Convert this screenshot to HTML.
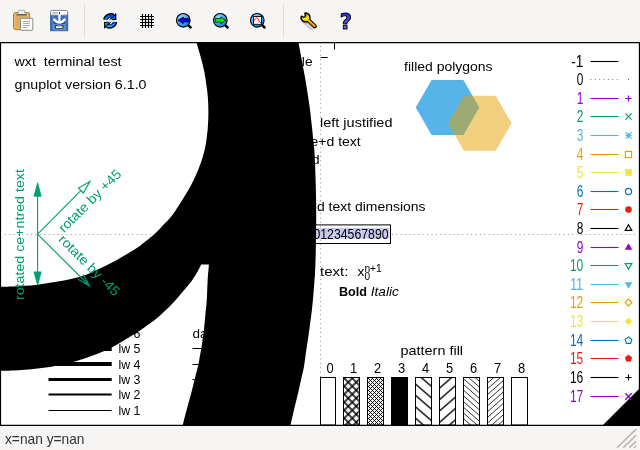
<!DOCTYPE html>
<html lang="en"><head><meta charset="utf-8"><title>gnuplot wxt terminal test</title>
<style>
html,body{margin:0;padding:0;width:640px;height:450px;overflow:hidden;background:#f6f5f4}
svg{display:block;position:absolute;left:0;top:0;will-change:transform}
text{font-family:"Liberation Sans", "DejaVu Sans", sans-serif;white-space:pre}
.g text{fill:#009e73}
</style></head><body>
<svg width="640" height="450" viewBox="0 0 640 450" font-size="13.5" fill="#000">
<defs>
<radialGradient id="lens" cx="0.35" cy="0.3" r="0.8"><stop offset="0" stop-color="#a8dcff"/><stop offset="0.6" stop-color="#3aa0f0"/><stop offset="1" stop-color="#0a6fd8"/></radialGradient>
<linearGradient id="qg" x1="0" y1="0" x2="0" y2="1"><stop offset="0" stop-color="#1c1ce8"/><stop offset="1" stop-color="#7a7aff"/></linearGradient>
<linearGradient id="bl" x1="0" y1="0" x2="0" y2="1"><stop offset="0" stop-color="#0a3cff"/><stop offset="1" stop-color="#1fa8ff"/></linearGradient>
</defs>

<rect x="0" y="0" width="640" height="450" fill="#f6f5f4"/>
<rect x="0" y="42" width="640" height="384" fill="#fff"/>
<g id="plot">
<path d="M320.5 46V425" stroke="#000" stroke-opacity="0.43" stroke-width="1" stroke-dasharray="1 3.4" fill="none"/>
<path d="M4.7 234.5H638" stroke="#000" stroke-opacity="0.43" stroke-width="1" stroke-dasharray="1 3.4" fill="none"/>
<path d="M334.5 43V49.5M320.5 57.5H327.7" stroke="#000" stroke-width="1" fill="none"/>
<text x="14.5" y="65.7" textLength="107.0" lengthAdjust="spacingAndGlyphs">wxt  terminal test</text>
<text x="14.5" y="89.4" textLength="132.0" lengthAdjust="spacingAndGlyphs">gnuplot version 6.1.0</text>
<text x="312.6" y="65.9" text-anchor="end" textLength="82.0" lengthAdjust="spacingAndGlyphs">show ticscale</text>
<text x="320.0" y="126.5" textLength="72.5" lengthAdjust="spacingAndGlyphs">left justified</text>
<text x="320.0" y="145.7" text-anchor="middle" textLength="81.5" lengthAdjust="spacingAndGlyphs">centre+d text</text>
<text x="319.8" y="164.4" text-anchor="end" textLength="80.0" lengthAdjust="spacingAndGlyphs">right justified</text>
<text x="320.0" y="210.8" text-anchor="middle" textLength="211.0" lengthAdjust="spacingAndGlyphs">true vs. estimated text dimensions</text>
<rect x="252" y="228" width="137.4" height="10.6" fill="#c9c9ee"/>
<rect x="249.5" y="224.9" width="141" height="18.6" fill="none" stroke="#000" stroke-width="1"/>
<text x="320.3" y="239.1" text-anchor="middle" textLength="136.5" lengthAdjust="spacingAndGlyphs" font-size="15">12345678901234567890</text>
<text x="348.3" y="276.3" text-anchor="end" textLength="99.8" lengthAdjust="spacingAndGlyphs">Enhanced text:</text>
<text x="357.4" y="276.3" textLength="6.9" lengthAdjust="spacingAndGlyphs">x</text>
<text x="364.4" y="279.7" font-size="10.4" textLength="5.6" lengthAdjust="spacingAndGlyphs">0</text>
<text x="364.4" y="271.8" font-size="10.4" textLength="17.4" lengthAdjust="spacingAndGlyphs">n+1</text>
<text x="339" y="295.9" font-weight="bold" textLength="28" lengthAdjust="spacingAndGlyphs">Bold</text>
<text x="370.8" y="295.9" font-style="italic" textLength="28" lengthAdjust="spacingAndGlyphs">Italic</text>
<text x="448.3" y="70.8" text-anchor="middle" textLength="88.5" lengthAdjust="spacingAndGlyphs">filled polygons</text>
<polygon points="479.3,107.5 463.4,135.0 431.6,135.0 415.7,107.5 431.6,80.0 463.4,80.0" fill="#56b4e9"/>
<polygon points="511.6,123.2 495.7,150.7 463.9,150.7 448.0,123.2 463.9,95.7 495.7,95.7" fill="#e69f00" fill-opacity="0.5"/>
<text x="431.8" y="355.3" text-anchor="middle" textLength="62.5" lengthAdjust="spacingAndGlyphs">pattern fill</text>
<rect x="320.5" y="377.5" width="15" height="47.5" fill="#fff" stroke="#000"/>
<text x="330.0" y="373.0" text-anchor="middle" textLength="7.2" lengthAdjust="spacingAndGlyphs" font-size="15.2">0</text>
<clipPath id="c1"><rect x="343.5" y="377.5" width="16" height="47.5"/></clipPath>
<rect x="343.5" y="377.5" width="16" height="47.5" fill="#fff"/>
<g clip-path="url(#c1)" stroke="#000" stroke-width="2.00" stroke-opacity="0.72" fill="none"><path d="M288.00 370L348.00 430M296.00 370L356.00 430M304.00 370L364.00 430M312.00 370L372.00 430M320.00 370L380.00 430M328.00 370L388.00 430M336.00 370L396.00 430M344.00 370L404.00 430M352.00 370L412.00 430"/><path d="M344.50 370L284.50 430M352.50 370L292.50 430M360.50 370L300.50 430M368.50 370L308.50 430M376.50 370L316.50 430M384.50 370L324.50 430M392.50 370L332.50 430M400.50 370L340.50 430M408.50 370L348.50 430M416.50 370L356.50 430"/></g>
<rect x="343.5" y="377.5" width="16" height="47.5" fill="none" stroke="#000"/>
<text x="353.5" y="373.0" text-anchor="middle" textLength="7.2" lengthAdjust="spacingAndGlyphs" font-size="15.2">1</text>
<clipPath id="c2"><rect x="367.5" y="377.5" width="16" height="47.5"/></clipPath>
<rect x="367.5" y="377.5" width="16" height="47.5" fill="#fff"/>
<g clip-path="url(#c2)" stroke="#000" stroke-width="0.95" stroke-opacity="1.00" fill="none"><path d="M312.00 370L372.00 430M316.00 370L376.00 430M320.00 370L380.00 430M324.00 370L384.00 430M328.00 370L388.00 430M332.00 370L392.00 430M336.00 370L396.00 430M340.00 370L400.00 430M344.00 370L404.00 430M348.00 370L408.00 430M352.00 370L412.00 430M356.00 370L416.00 430M360.00 370L420.00 430M364.00 370L424.00 430M368.00 370L428.00 430M372.00 370L432.00 430M376.00 370L436.00 430"/><path d="M368.90 370L308.90 430M372.90 370L312.90 430M376.90 370L316.90 430M380.90 370L320.90 430M384.90 370L324.90 430M388.90 370L328.90 430M392.90 370L332.90 430M396.90 370L336.90 430M400.90 370L340.90 430M404.90 370L344.90 430M408.90 370L348.90 430M412.90 370L352.90 430M416.90 370L356.90 430M420.90 370L360.90 430M424.90 370L364.90 430M428.90 370L368.90 430M432.90 370L372.90 430M436.90 370L376.90 430M440.90 370L380.90 430"/></g>
<rect x="367.5" y="377.5" width="16" height="47.5" fill="none" stroke="#000"/>
<text x="377.5" y="373.0" text-anchor="middle" textLength="7.2" lengthAdjust="spacingAndGlyphs" font-size="15.2">2</text>
<rect x="391.5" y="377.5" width="16" height="47.5" fill="#000" stroke="#000"/>
<text x="401.5" y="373.0" text-anchor="middle" textLength="7.2" lengthAdjust="spacingAndGlyphs" font-size="15.2">3</text>
<clipPath id="c4"><rect x="415.5" y="377.5" width="16" height="47.5"/></clipPath>
<rect x="415.5" y="377.5" width="16" height="47.5" fill="#fff"/>
<path d="M413.5 359.42L433.5 376.82M413.5 370.82L433.5 388.22M413.5 382.22L433.5 399.62M413.5 393.62L433.5 411.02M413.5 405.02L433.5 422.42M413.5 416.42L433.5 433.82M413.5 427.82L433.5 445.22" stroke="#000" stroke-opacity="0.80" stroke-width="1.70" fill="none" clip-path="url(#c4)"/>
<rect x="415.5" y="377.5" width="16" height="47.5" fill="none" stroke="#000"/>
<text x="425.5" y="373.0" text-anchor="middle" textLength="7.2" lengthAdjust="spacingAndGlyphs" font-size="15.2">4</text>
<clipPath id="c5"><rect x="439.5" y="377.5" width="16" height="47.5"/></clipPath>
<rect x="439.5" y="377.5" width="16" height="47.5" fill="#fff"/>
<path d="M437.5 378.59L457.5 360.99M437.5 389.99L457.5 372.39M437.5 401.39L457.5 383.79M437.5 412.79L457.5 395.19M437.5 424.19L457.5 406.59M437.5 435.59L457.5 417.99" stroke="#000" stroke-opacity="0.80" stroke-width="1.70" fill="none" clip-path="url(#c5)"/>
<rect x="439.5" y="377.5" width="16" height="47.5" fill="none" stroke="#000"/>
<text x="449.5" y="373.0" text-anchor="middle" textLength="7.2" lengthAdjust="spacingAndGlyphs" font-size="15.2">5</text>
<clipPath id="c6"><rect x="463.5" y="377.5" width="16" height="47.5"/></clipPath>
<rect x="463.5" y="377.5" width="16" height="47.5" fill="#fff"/>
<path d="M461.5 359.92L481.5 377.52M461.5 365.62L481.5 383.22M461.5 371.32L481.5 388.92M461.5 377.02L481.5 394.62M461.5 382.72L481.5 400.32M461.5 388.42L481.5 406.02M461.5 394.12L481.5 411.72M461.5 399.82L481.5 417.42M461.5 405.52L481.5 423.12M461.5 411.22L481.5 428.82M461.5 416.92L481.5 434.52M461.5 422.62L481.5 440.22" stroke="#000" stroke-opacity="0.85" stroke-width="0.95" fill="none" clip-path="url(#c6)"/>
<rect x="463.5" y="377.5" width="16" height="47.5" fill="none" stroke="#000"/>
<text x="473.5" y="373.0" text-anchor="middle" textLength="7.2" lengthAdjust="spacingAndGlyphs" font-size="15.2">6</text>
<clipPath id="c7"><rect x="487.5" y="377.5" width="16" height="47.5"/></clipPath>
<rect x="487.5" y="377.5" width="16" height="47.5" fill="#fff"/>
<path d="M485.5 379.19L505.5 361.59M485.5 384.89L505.5 367.29M485.5 390.59L505.5 372.99M485.5 396.29L505.5 378.69M485.5 401.99L505.5 384.39M485.5 407.69L505.5 390.09M485.5 413.39L505.5 395.79M485.5 419.09L505.5 401.49M485.5 424.79L505.5 407.19M485.5 430.49L505.5 412.89M485.5 436.19L505.5 418.59M485.5 441.89L505.5 424.29" stroke="#000" stroke-opacity="0.85" stroke-width="0.95" fill="none" clip-path="url(#c7)"/>
<rect x="487.5" y="377.5" width="16" height="47.5" fill="none" stroke="#000"/>
<text x="497.5" y="373.0" text-anchor="middle" textLength="7.2" lengthAdjust="spacingAndGlyphs" font-size="15.2">7</text>
<rect x="511.5" y="377.5" width="16" height="47.5" fill="#fff" stroke="#000"/>
<text x="521.5" y="373.0" text-anchor="middle" textLength="7.2" lengthAdjust="spacingAndGlyphs" font-size="15.2">8</text>
<path d="M48.5 410.5H111.7" stroke="#000" stroke-width="1"/>
<text x="118.5" y="415.4" textLength="22.0" lengthAdjust="spacingAndGlyphs">lw 1</text>
<path d="M48.5 394.4H111.7" stroke="#000" stroke-width="2"/>
<text x="118.5" y="399.3" textLength="22.0" lengthAdjust="spacingAndGlyphs">lw 2</text>
<path d="M48.5 379.5H111.7" stroke="#000" stroke-width="3"/>
<text x="118.5" y="384.4" textLength="22.0" lengthAdjust="spacingAndGlyphs">lw 3</text>
<path d="M48.5 364.0H111.7" stroke="#000" stroke-width="4"/>
<text x="118.5" y="368.9" textLength="22.0" lengthAdjust="spacingAndGlyphs">lw 4</text>
<path d="M48.5 348.5H111.7" stroke="#000" stroke-width="5"/>
<text x="118.5" y="353.4" textLength="22.0" lengthAdjust="spacingAndGlyphs">lw 5</text>
<path d="M48.5 333.0H111.7" stroke="#000" stroke-width="6"/>
<text x="118.5" y="337.9" textLength="22.0" lengthAdjust="spacingAndGlyphs">lw 6</text>
<text x="192.5" y="338.2">dashtype solid</text>
<path d="M192.5 348.5H256" stroke="#000" stroke-width="1"/>
<text x="262.0" y="353.1">dt 1</text>
<path d="M192.5 364.5H256" stroke="#000" stroke-width="1" stroke-dasharray="6 3"/>
<text x="262.0" y="369.1">dt 2</text>
<path d="M192.5 379.5H256" stroke="#000" stroke-width="1" stroke-dasharray="2 3"/>
<text x="262.0" y="384.1">dt 3</text>
<path d="M192.5 394.5H256" stroke="#000" stroke-width="1" stroke-dasharray="8 3 2 3"/>
<text x="262.0" y="399.1">dt 4</text>
<path d="M192.5 410.5H256" stroke="#000" stroke-width="1" stroke-dasharray="8 3 2 3 2 3"/>
<text x="262.0" y="415.1">dt 5</text>
<text x="583.3" y="66.8" text-anchor="end" font-size="16" style="fill:#000" textLength="12.1" lengthAdjust="spacingAndGlyphs">-1</text>
<path d="M590.5 61.5H618.5" stroke="#000" stroke-width="1.1"/>
<text x="583.3" y="84.8" text-anchor="end" font-size="16" style="fill:#000" textLength="6.6" lengthAdjust="spacingAndGlyphs">0</text>
<path d="M590.5 79.5H618.5" stroke="#000" stroke-opacity="0.5" stroke-dasharray="1 3.36"/>
<rect x="628" y="79.1" width="1" height="1" fill="#000" fill-opacity="0.7"/>
<text x="583.3" y="103.8" text-anchor="end" font-size="16" style="fill:#9400d3" textLength="6.6" lengthAdjust="spacingAndGlyphs">1</text>
<path d="M590.5 98.5H618.5" stroke="#9400d3" stroke-width="1.1"/>
<path d="M625.4 98.5h6.2M628.5 95.4v6.2" stroke="#9400d3" stroke-width="1.15" fill="none"/>
<text x="583.3" y="121.8" text-anchor="end" font-size="16" style="fill:#009e73" textLength="6.6" lengthAdjust="spacingAndGlyphs">2</text>
<path d="M590.5 116.5H618.5" stroke="#009e73" stroke-width="1.1"/>
<path d="M625.4 113.4l6.2 6.2M625.4 119.6l6.2 -6.2" stroke="#009e73" stroke-width="1.15" fill="none"/>
<text x="583.3" y="140.8" text-anchor="end" font-size="16" style="fill:#56b4e9" textLength="6.6" lengthAdjust="spacingAndGlyphs">3</text>
<path d="M590.5 135.5H618.5" stroke="#56b4e9" stroke-width="1.1"/>
<path d="M625.4 135.5h6.2M628.5 132.4v6.2M625.4 132.4l6.2 6.2M625.4 138.6l6.2 -6.2" stroke="#56b4e9" stroke-width="1.15" fill="none"/>
<text x="583.3" y="159.8" text-anchor="end" font-size="16" style="fill:#e69f00" textLength="6.6" lengthAdjust="spacingAndGlyphs">4</text>
<path d="M590.5 154.5H618.5" stroke="#e69f00" stroke-width="1.1"/>
<rect x="625.4" y="151.4" width="6.2" height="6.2" stroke="#e69f00" stroke-width="1.15" fill="none"/>
<text x="583.3" y="177.8" text-anchor="end" font-size="16" style="fill:#f0e442" textLength="6.6" lengthAdjust="spacingAndGlyphs">5</text>
<path d="M590.5 172.5H618.5" stroke="#f0e442" stroke-width="1.1"/>
<rect x="625.4" y="169.4" width="6.2" height="6.2" fill="#f0e442" stroke="#f0e442" stroke-width="0.6"/>
<text x="583.3" y="196.8" text-anchor="end" font-size="16" style="fill:#0072b2" textLength="6.6" lengthAdjust="spacingAndGlyphs">6</text>
<path d="M590.5 191.5H618.5" stroke="#0072b2" stroke-width="1.1"/>
<circle cx="628.5" cy="191.5" r="3.1" stroke="#0072b2" stroke-width="1.15" fill="none"/>
<text x="583.3" y="214.8" text-anchor="end" font-size="16" style="fill:#e51e10" textLength="6.6" lengthAdjust="spacingAndGlyphs">7</text>
<path d="M590.5 209.5H618.5" stroke="#e51e10" stroke-width="1.1"/>
<circle cx="628.5" cy="209.5" r="3.1" fill="#e51e10" stroke="#e51e10" stroke-width="0.6"/>
<text x="583.3" y="233.8" text-anchor="end" font-size="16" style="fill:#000000" textLength="6.6" lengthAdjust="spacingAndGlyphs">8</text>
<path d="M590.5 228.5H618.5" stroke="#000000" stroke-width="1.1"/>
<polygon points="628.5,224.7 631.8,230.4 625.2,230.4" stroke="#000000" stroke-width="1.15" fill="none"/>
<text x="583.3" y="252.8" text-anchor="end" font-size="16" style="fill:#9400d3" textLength="6.6" lengthAdjust="spacingAndGlyphs">9</text>
<path d="M590.5 247.5H618.5" stroke="#9400d3" stroke-width="1.1"/>
<polygon points="628.5,243.7 631.8,249.4 625.2,249.4" fill="#9400d3" stroke="#9400d3" stroke-width="0.6"/>
<text x="583.3" y="270.8" text-anchor="end" font-size="16" style="fill:#009e73" textLength="13.4" lengthAdjust="spacingAndGlyphs">10</text>
<path d="M590.5 265.5H618.5" stroke="#009e73" stroke-width="1.1"/>
<polygon points="628.5,269.3 625.2,263.6 631.8,263.6" stroke="#009e73" stroke-width="1.15" fill="none"/>
<text x="583.3" y="289.8" text-anchor="end" font-size="16" style="fill:#56b4e9" textLength="13.4" lengthAdjust="spacingAndGlyphs">11</text>
<path d="M590.5 284.5H618.5" stroke="#56b4e9" stroke-width="1.1"/>
<polygon points="628.5,288.3 625.2,282.6 631.8,282.6" fill="#56b4e9" stroke="#56b4e9" stroke-width="0.6"/>
<text x="583.3" y="307.8" text-anchor="end" font-size="16" style="fill:#e69f00" textLength="13.4" lengthAdjust="spacingAndGlyphs">12</text>
<path d="M590.5 302.5H618.5" stroke="#e69f00" stroke-width="1.1"/>
<polygon points="631.9,302.5 628.5,305.9 625.1,302.5 628.5,299.1" stroke="#e69f00" stroke-width="1.15" fill="none"/>
<text x="583.3" y="326.8" text-anchor="end" font-size="16" style="fill:#f0e442" textLength="13.4" lengthAdjust="spacingAndGlyphs">13</text>
<path d="M590.5 321.5H618.5" stroke="#f0e442" stroke-width="1.1"/>
<polygon points="631.9,321.5 628.5,324.9 625.1,321.5 628.5,318.1" fill="#f0e442" stroke="#f0e442" stroke-width="0.6"/>
<text x="583.3" y="345.8" text-anchor="end" font-size="16" style="fill:#0072b2" textLength="13.4" lengthAdjust="spacingAndGlyphs">14</text>
<path d="M590.5 340.5H618.5" stroke="#0072b2" stroke-width="1.1"/>
<polygon points="628.5,337.0 631.8,339.4 630.6,343.3 626.4,343.3 625.2,339.4" stroke="#0072b2" stroke-width="1.15" fill="none"/>
<text x="583.3" y="363.8" text-anchor="end" font-size="16" style="fill:#e51e10" textLength="13.4" lengthAdjust="spacingAndGlyphs">15</text>
<path d="M590.5 358.5H618.5" stroke="#e51e10" stroke-width="1.1"/>
<polygon points="628.5,355.0 631.8,357.4 630.6,361.3 626.4,361.3 625.2,357.4" fill="#e51e10" stroke="#e51e10" stroke-width="0.6"/>
<text x="583.3" y="382.8" text-anchor="end" font-size="16" style="fill:#000000" textLength="13.4" lengthAdjust="spacingAndGlyphs">16</text>
<path d="M590.5 377.5H618.5" stroke="#000000" stroke-width="1.1"/>
<path d="M625.4 377.5h6.2M628.5 374.4v6.2" stroke="#000000" stroke-width="1.15" fill="none"/>
<text x="583.3" y="401.8" text-anchor="end" font-size="16" style="fill:#9400d3" textLength="13.4" lengthAdjust="spacingAndGlyphs">17</text>
<path d="M590.5 396.5H618.5" stroke="#9400d3" stroke-width="1.1"/>
<path d="M625.4 393.4l6.2 6.2M625.4 399.6l6.2 -6.2" stroke="#9400d3" stroke-width="1.15" fill="none"/>
<path d="M196.3 42.0C196.8 43.5 198.0 47.7 199.0 51.1C200.0 54.5 201.2 58.5 202.1 62.2C203.0 65.9 203.9 69.6 204.6 73.3C205.3 77.0 205.8 80.7 206.3 84.4C206.8 88.1 207.4 91.9 207.7 95.6C208.0 99.3 208.2 103.0 208.3 106.7C208.4 110.4 208.4 114.1 208.3 117.8C208.2 121.5 208.0 125.2 207.7 128.9C207.4 132.6 206.8 136.8 206.4 140.0C206.0 143.2 205.6 145.5 205.0 148.3C204.4 151.1 203.6 153.9 202.8 156.7C202.0 159.5 201.0 162.2 200.0 165.0C199.0 167.8 197.9 170.5 196.7 173.3C195.5 176.1 194.2 178.9 192.8 181.7C191.4 184.5 189.9 187.2 188.3 190.0C186.7 192.8 185.0 195.5 183.3 198.3C181.6 201.1 179.8 204.0 178.0 206.7C176.2 209.4 174.3 212.5 172.8 214.5C171.3 216.5 170.4 217.4 169.1 218.9C167.8 220.4 166.3 221.8 164.9 223.3C163.5 224.8 162.1 226.3 160.7 227.8C159.3 229.3 158.0 230.7 156.4 232.2C154.8 233.7 153.0 235.2 151.3 236.7C149.6 238.2 147.8 239.6 146.0 241.1C144.2 242.6 142.9 243.7 140.4 245.4C137.9 247.1 134.3 249.5 131.2 251.4C128.2 253.3 125.0 255.2 121.9 257.0C118.8 258.8 115.6 260.6 112.5 262.2C109.4 263.8 105.6 265.7 103.1 266.9C100.6 268.1 100.1 268.3 97.5 269.5C94.9 270.7 91.2 272.8 87.5 274.2C83.8 275.6 79.2 276.9 75.0 278.0C70.8 279.1 66.7 280.0 62.5 280.8C58.3 281.6 54.2 282.2 50.0 282.8C45.8 283.4 41.7 284.2 37.5 284.7C33.3 285.2 29.2 285.5 25.0 285.8C20.8 286.1 16.7 286.4 12.5 286.6C8.3 286.8 2.1 286.8 0.0 286.8L0.0 370.8C2.1 370.8 8.3 370.7 12.5 370.5C16.7 370.3 20.8 370.1 25.0 369.7C29.2 369.3 33.3 368.9 37.5 368.4C41.7 367.9 45.8 367.5 50.0 366.9C54.2 366.3 58.3 365.5 62.5 364.6C66.7 363.7 70.8 362.6 75.0 361.4C79.2 360.2 83.3 358.9 87.5 357.5C91.7 356.1 96.6 354.2 100.0 352.8C103.4 351.4 105.5 350.4 108.0 349.2C110.5 348.0 112.7 346.9 115.0 345.7C117.3 344.4 119.5 343.0 121.7 341.7C123.9 340.4 126.1 339.0 128.3 337.7C130.5 336.4 132.8 335.1 135.0 333.7C137.2 332.3 139.5 330.8 141.7 329.3C143.9 327.8 146.1 326.2 148.3 324.6C150.5 323.0 152.8 321.5 155.0 319.7C157.2 317.9 159.5 315.9 161.7 313.9C163.9 311.9 166.2 309.7 168.3 307.7C170.4 305.7 172.1 303.8 174.0 301.7C175.9 299.6 178.1 297.2 180.0 295.0C181.9 292.8 183.8 290.5 185.7 288.3C187.5 286.1 189.4 283.9 191.1 281.7C192.8 279.5 194.2 277.2 195.6 275.0C197.0 272.8 198.4 270.0 199.3 268.3C200.2 266.6 201.0 265.2 201.3 264.6L208.9 264.6C208.7 267.5 207.9 275.8 207.6 281.7C207.2 287.6 207.2 294.5 206.8 300.0C206.4 305.5 205.9 309.7 205.4 314.5C204.9 319.3 204.6 324.1 204.0 328.9C203.4 333.7 202.8 338.6 202.1 343.4C201.4 348.2 200.2 354.2 199.6 357.8C199.0 361.4 199.1 361.4 198.3 365.0C197.5 368.6 195.8 374.7 194.6 379.5C193.4 384.3 192.3 389.1 191.0 393.9C189.7 398.7 188.3 403.6 187.0 408.4C185.7 413.2 184.0 419.9 183.3 422.8C182.6 425.7 182.7 425.1 182.6 425.5L290.3 425.5C290.4 425.1 290.3 425.7 291.0 422.8C291.7 419.9 293.2 413.2 294.3 408.4C295.4 403.6 296.8 398.7 297.9 393.9C299.0 389.1 300.1 384.0 301.1 379.5C302.1 375.0 303.1 371.4 303.9 367.0C304.7 362.6 305.1 358.1 305.8 353.4C306.5 348.7 307.3 343.7 308.0 338.9C308.7 334.1 309.4 329.3 310.0 324.5C310.6 319.7 311.3 315.2 311.9 310.0C312.5 304.8 312.9 300.2 313.5 293.3C314.1 286.4 314.8 277.0 315.2 268.9C315.6 260.8 315.7 252.6 315.9 244.4C316.1 236.2 316.1 225.4 316.2 220.0C316.2 214.6 316.2 215.9 316.2 212.0C316.2 208.1 316.1 201.8 316.0 196.7C315.9 191.5 315.8 186.3 315.6 181.1C315.5 175.9 315.3 170.8 315.1 165.6C314.9 160.4 314.6 154.3 314.3 150.0C314.0 145.7 313.7 143.5 313.3 140.0C312.9 136.5 312.8 134.5 312.2 128.9C311.6 123.4 310.6 114.1 309.6 106.7C308.6 99.3 307.4 91.8 306.2 84.4C305.0 77.0 303.5 69.3 302.2 62.2C300.9 55.1 299.0 45.4 298.4 42.0Z" fill="#000"/>
<path d="M602.5 425.5L639 389V425.5Z" fill="#000"/>
<path d="M625.4 393.4l6.2 6.2M625.4 399.6l6.2 -6.2" stroke="#9400d3" stroke-width="1.15" fill="none"/>
<g class="g" stroke-linejoin="miter">
<path d="M37.6 196V272" stroke="#009e73" stroke-width="1.1" fill="none"/>
<path d="M37.6 182.8L41.2 196.2H34L37.6 182.8Z" fill="#009e73" stroke="#009e73" stroke-width="0.8"/>
<path d="M37.6 285.3L41.2 271.9H34L37.6 285.3Z" fill="#009e73" stroke="#009e73" stroke-width="0.8"/>
<path d="M37.6 234.1L80.8 190.6" stroke="#009e73" stroke-width="1.1" fill="none"/>
<path d="M90.0 181.4L83.3 193.0L78.4 188.1Z" fill="#fff" stroke="#009e73" stroke-width="1.1"/>
<path d="M37.6 234.1L89.6 286.0M78.0 279.3L89.6 286.0L82.9 274.4" stroke="#009e73" stroke-width="1.1" fill="none"/>
<text transform="translate(24.2 234.6) rotate(-90)" text-anchor="middle" textLength="131" lengthAdjust="spacingAndGlyphs">rotated ce+ntred text</text>
<text transform="translate(64 233.3) rotate(-45)" textLength="82.5" lengthAdjust="spacingAndGlyphs">rotate by +45</text>
<text transform="translate(57.8 240.3) rotate(45)" textLength="80" lengthAdjust="spacingAndGlyphs">rotate by -45</text>
</g>
<path d="M0.5 42V426M0 42.6H640M0 425.4H640" stroke="#000" stroke-width="1.2" fill="none"/>
<rect x="638.85" y="42" width="1.15" height="384" fill="#000"/>
</g>
<rect x="0" y="426" width="640" height="24" fill="#f6f5f4"/>
<text x="5" y="443.6" font-size="14.4" style="fill:#2e3436" textLength="79.5" lengthAdjust="spacingAndGlyphs">x=nan y=nan</text>
<path d="M617 447.8L636 429.3M623.3 447.8L636 435.3M629.3 447.8L636 441.2M634 447.8L636 446" stroke="#b4aea6" stroke-width="1.4" fill="none"/>
<rect x="0" y="0" width="640" height="42" fill="#f6f5f4"/>
<path d="M84.5 4V37M283.5 4V37" stroke="#dfdcd8" stroke-width="1"/>
<g id="icons">
<!-- clipboard -->
<rect x="13.5" y="12.5" width="16.2" height="17.2" rx="2.4" fill="#e2ab60" stroke="#b47a30" stroke-width="1"/>
<rect x="14.8" y="13.8" width="13.6" height="14.6" rx="1.4" fill="none" stroke="#ecc287" stroke-width="0.9"/>
<rect x="18.4" y="10.3" width="6.4" height="4" rx="1.2" fill="#f1f1ef" stroke="#8d8f8a" stroke-width="0.8"/>
<rect x="16.4" y="13.4" width="10.4" height="2.2" rx="1.1" fill="#60625e"/>
<rect x="17.4" y="12.9" width="8.4" height="1" rx="0.5" fill="#e4e4e2"/>
<rect x="20.5" y="18.3" width="12.3" height="12" rx="0.8" fill="#fdfdfd" stroke="#8a8c87" stroke-width="1"/>
<path d="M23 21.5H30M23 23.5H30M23 25.5H30M23 27.5H27.6" stroke="#a9aba7" stroke-width="1"/>
<!-- save -->
<rect x="50.4" y="14" width="17.4" height="16.8" fill="#3d6cb6" stroke="#35609f" stroke-width="0.8"/>
<path d="M53 15.4V24M65.7 15.4V24" stroke="#6c98de" stroke-width="0.8" fill="none"/>
<rect x="52.4" y="24" width="13.6" height="6.3" fill="#5a8ad6"/>
<rect x="50.6" y="10.4" width="17" height="4.8" rx="1.3" fill="#fff" stroke="#7b7d79" stroke-width="0.9"/>
<rect x="52" y="12.1" width="6" height="1.6" fill="#b9bbb6"/>
<rect x="59" y="12" width="1" height="2" rx="0.5" fill="#111"/>
<path d="M53.6 21.6Q59.4 26.4 65.2 21.6L65.2 23.6Q59.4 25.2 53.6 23.6Z" fill="#1e2a3a" fill-opacity="0.6"/>
<path d="M59.4 14.6V22" stroke="#fff" stroke-width="2.3" fill="none"/>
<path d="M54.4 19.7Q56.6 22.5 59.4 22.5Q62.2 22.5 64.4 19.7" stroke="#fff" stroke-width="2.6" fill="none" stroke-linecap="round"/>
<rect x="54.9" y="25.1" width="8.6" height="3.7" rx="0.9" fill="#3a3c39"/>
<rect x="56" y="26.2" width="6.4" height="1.8" fill="#f6f6f4"/>
<rect x="57.4" y="24.9" width="3.6" height="1.3" fill="#5a8ad6"/>
<!-- refresh -->
<g fill="none" stroke-linecap="butt" transform="translate(110.2 20.8) scale(0.95 0.94) translate(-110.2 -20.8)">
<path d="M105 19.8A6.2 5.6 0 0 1 113.6 15.4" stroke="#000" stroke-width="4.6"/>
<path d="M115.4 22A6.2 5.6 0 0 1 106.8 26.4" stroke="#000" stroke-width="4.6"/>
<path d="M116.2 13V20H109.2Z" fill="#000" stroke="#000" stroke-width="0.9" stroke-linejoin="round"/>
<path d="M104.2 28.6V22H111.2Z" fill="#000" stroke="#000" stroke-width="0.9" stroke-linejoin="round"/>
<path d="M105.2 19.6A6.2 5.6 0 0 1 113.4 15.6" stroke="url(#bl)" stroke-width="2.3"/>
<path d="M115.2 22.2A6.2 5.6 0 0 1 107 26.2" stroke="url(#bl)" stroke-width="2.3"/>
<path d="M115.3 15.2V18.9H111.6Z" fill="#1a6cff" stroke="none"/>
<path d="M105 26.5V22.9H108.7Z" fill="#18a4ff" stroke="none"/>
<path d="M103.8 21.2L108 20.6Q110 19.6 112.4 20" stroke="#fff" stroke-width="1.3"/>
<path d="M116.6 20.6L112.6 21.2Q110.6 22.2 108.2 21.8" stroke="#fff" stroke-width="1.3"/>
</g>
<!-- grid -->
<rect x="139.6" y="13.6" width="14.8" height="14.8" rx="3.5" fill="#fff" fill-opacity="0.9"/>
<path d="M142.5 14V28M145.5 14V28M148.5 14V28M151.5 14V28M140 16.5H154M140 19.5H154M140 22.5H154M140 25.5H154" stroke="#000" stroke-width="1.15" fill="none"/>
<!-- zoom prev -->
<g>
<path d="M188 25L190.6 27.5" stroke="#000" stroke-width="2.5" stroke-linecap="round"/>
<circle cx="183.3" cy="20.3" r="6.8" fill="url(#lens)" stroke="#000" stroke-width="1.1"/>
<path d="M178 20.3L183.2 16.9V18.5H189.2V22.1H183.2V23.7Z" fill="#0000f0" stroke="#000" stroke-width="0.7" stroke-linejoin="round"/>
</g>
<!-- zoom next -->
<g>
<path d="M225 25L227.6 27.5" stroke="#000" stroke-width="2.5" stroke-linecap="round"/>
<circle cx="220.3" cy="20.3" r="6.8" fill="url(#lens)" stroke="#000" stroke-width="1.1"/>
<path d="M225.8 20.3L220.8 16.9V18.5H215.3V22.1H220.8V23.7Z" fill="#00f000" stroke="#000" stroke-width="0.7" stroke-linejoin="round"/>
</g>
<!-- zoom auto -->
<g>
<path d="M262 25L264.6 27.5" stroke="#000" stroke-width="2.5" stroke-linecap="round"/>
<circle cx="257.3" cy="20.3" r="6.8" fill="url(#lens)" stroke="#000" stroke-width="1.1"/>
<rect x="253.5" y="16.5" width="8" height="7.8" fill="#fff" stroke="#000" stroke-width="0.9"/>
<path d="M254.4 20.8C255 18 255.8 17.9 257 17.9C258.6 17.9 258.6 22.6 261 23" stroke="#f00" stroke-width="0.9" fill="none"/>
</g>
<!-- wrench -->
<g>
<path d="M304.5 22.4L311.5 28.8" stroke="#9a968c" stroke-opacity="0.4" stroke-width="3.4" stroke-linecap="round"/>
<path d="M301.4 20.4Q304 23.8 308 22.4" stroke="#9a968c" stroke-opacity="0.35" stroke-width="2.5" fill="none"/>
<path d="M308.8 20.6L314.7 26.2" stroke="#000" stroke-width="4.3" stroke-linecap="round"/>
<path d="M306.3 13Q310.8 14.6 309.7 19.8L308.4 21.2Q303.4 23 301.1 18.5L301.5 16.3Q303.4 17.8 305 17Q306 15.4 305 13.3Z" fill="#000" stroke="#000" stroke-width="1.7" stroke-linejoin="round"/>
<path d="M309 20.8L314.5 26" stroke="#ffa000" stroke-width="2.4" stroke-linecap="round"/>
<path d="M306.5 13.9Q309.8 15.4 309 19.5L308 20.6Q303.8 22 301.9 18.4L302 17.4Q303.6 18.6 305.5 17.6Q306.9 15.8 306.5 13.9Z" fill="#f8e800" stroke="#e6c400" stroke-width="0.4"/>
</g>
<!-- help -->
<text x="345.9" y="28.5" text-anchor="middle" style="font-family:'DejaVu Sans','Liberation Sans',sans-serif;font-weight:bold;font-size:21px;fill:#fff;stroke:#fff;stroke-width:3;stroke-linejoin:round">?</text>
<text x="345.9" y="28.5" text-anchor="middle" style="font-family:'DejaVu Sans','Liberation Sans',sans-serif;font-weight:bold;font-size:21px;fill:url(#qg);stroke:#000;stroke-width:1;stroke-linejoin:round">?</text>
</g>

</svg></body></html>
